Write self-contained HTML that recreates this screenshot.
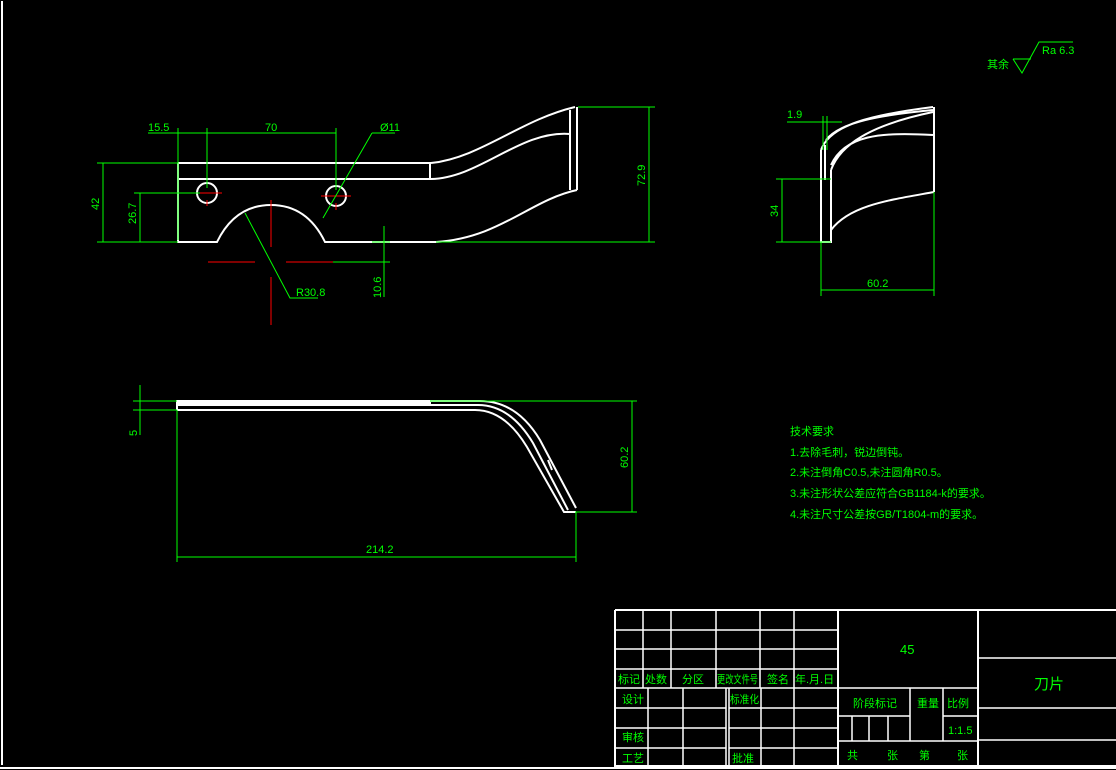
<!DOCTYPE html>
<html><head><meta charset="utf-8"><style>
html,body{margin:0;padding:0;background:#000;}
svg{display:block}
text{font-family:"Liberation Sans","Noto Sans CJK SC",sans-serif;fill:#00ff00;font-size:11px}
.w{stroke:#fff;fill:none;stroke-width:2}
.t{stroke:#fff;fill:none;stroke-width:1.5}
.g{stroke:#00ff00;fill:none;stroke-width:1}
.r{stroke:#ff0000;fill:none;stroke-width:1}
</style></head><body>
<svg width="1116" height="770" viewBox="0 0 1116 770" xmlns="http://www.w3.org/2000/svg">
<rect width="1116" height="770" fill="#000"/>
<path class="w" d="M2,1 V765 M0,768 H1116"/>
<!-- front view -->
<path class="w" d="M178,163 H431 M178,179 H431 M430,163 V179 M178,163 V242 H217 Q235,205 271,205 Q307,205 325,242 H436"/>
<path class="w" d="M431,163 C480,158 520,120 575,107 M431,179 C480,178 520,130 570,134 M436,242 C500,238 530,200 577,190 M577,107 V190 M570,110 V190"/>
<circle class="w" cx="207" cy="193" r="10"/>
<circle class="w" cx="336" cy="196" r="10"/>
<path class="r" d="M192,193 H222 M207,200 V206 M321,196 H351 M336,203 V210 M208,262 H255 M286,262 H333 M271,200 V247 M271,277 V325"/>
<path class="g" d="M333,262 H390 M148,133 H336 M178,128 V240 M207,128 V188 M336,128 V190 M372,133 H395 M372,133 L323,218 M97,163 H178 M97,242 H178 M103,163 V242 M134,193 H200 M140,193 V242 M578,107 H655 M436,242 H655 M649,107 V242 M245,213 L290,298 H318 M384,226 V297 M372,242 H390"/>
<text x="148" y="131">15.5</text>
<text x="265" y="131">70</text>
<text x="380" y="131">Ø11</text>
<text x="296" y="296">R30.8</text>
<text transform="translate(99,210) rotate(-90)">42</text>
<text transform="translate(136,224) rotate(-90)">26.7</text>
<text transform="translate(645,186) rotate(-90)">72.9</text>
<text transform="translate(381,298) rotate(-90)">10.6</text>
<!-- side view -->
<path class="w" d="M821,150 V242 H831 V170"/>
<path class="w" d="M821,150 C830,125 870,115 933,107 M826,140 C840,122 880,115 933,110 M831,165 C845,135 880,132 933,135 M831,170 C840,145 870,125 933,112 M831,230 C850,205 890,200 934,192 M934,107 V192 M825,145 V180"/>
<path class="g" d="M787,122 H842 M823,116 V150 M827,116 V150 M776,179 H831 M776,242 H831 M782,179 V242 M821,242 V296 M934,192 V296 M821,290 H934"/>
<text x="787" y="118">1.9</text>
<text x="867" y="287">60.2</text>
<text transform="translate(778,217) rotate(-90)">34</text>
<text x="987" y="68">其余</text>
<path class="g" d="M1013,59 H1031 M1013,59 L1022,73 L1039,42 H1073"/>
<text x="1042" y="54">Ra 6.3</text>
<!-- bottom view -->
<rect x="177" y="400" width="254" height="6" fill="#fff"/>
<path class="w" d="M177,410 H430 M177,400 V410"/>
<path class="w" d="M430,401 H480 C505,401 525,415 540,440 L576,508 M430,405 H478 C500,405 518,418 533,443 L568,510 M430,410 H475 C495,410 512,422 527,447 L564,512 H576 M548,460 L552,470"/>
<path class="g" d="M140,385 V435 M133,401 H177 M133,410 H177 M430,401 H637 M575,512 H637 M632,401 V512 M177,410 V562 M576,512 V562 M177,557 H576"/>
<text transform="translate(137,436) rotate(-90)">5</text>
<text transform="translate(628,468) rotate(-90)">60.2</text>
<text x="366" y="553">214.2</text>
<text x="790" y="435">技术要求</text>
<text x="790" y="456">1.去除毛刺，锐边倒钝。</text>
<text x="790" y="476">2.未注倒角C0.5,未注圆角R0.5。</text>
<text x="790" y="497">3.未注形状公差应符合GB1184-k的要求。</text>
<text x="790" y="518">4.未注尺寸公差按GB/T1804-m的要求。</text>
<!-- title block -->
<path class="w" d="M615,610 H1116 M615,610 V766 H1116 M838,610 V766 M978,610 V766"/>
<path class="t" d="M615,630 H838 M615,649 H838 M615,669 H838 M615,688 H838 M615,708 H726 M729,708 H838 M615,728 H726 M729,728 H838 M615,748 H726 M729,748 H838
M643,610 V688 M671,610 V688 M716,610 V688 M760,610 V688 M794,610 V688
M648,688 V766 M683,688 V766 M726,688 V766 M729,688 V766 M761,688 V766 M794,688 V766"/>
<path class="t" d="M838,688 H978 M838,716 H910 M838,741 H978 M910,688 V741 M943,688 V741 M943,716 H978 M852,716 V741 M869,716 V741 M888,716 V741 M978,658 H1116 M978,708 H1116 M978,740 H1116"/>
<g style="font-size:10px">
<text x="618" y="683">标记</text><text x="645" y="683">处数</text><text x="682" y="683">分区</text><text x="717" y="683" textLength="41" lengthAdjust="spacingAndGlyphs">更改文件号</text><text x="767" y="683">签名</text><text x="795" y="683">年.月.日</text>
<text x="622" y="703">设计</text><text x="730" y="703" textLength="29" lengthAdjust="spacingAndGlyphs">标准化</text>
<text x="622" y="741">审核</text><text x="622" y="762">工艺</text><text x="732" y="762">批准</text>
<text x="853" y="707">阶段标记</text><text x="917" y="707">重量</text><text x="947" y="707">比例</text>
<text x="948" y="734">1:1.5</text>
<text x="847" y="759">共</text><text x="887" y="759">张</text><text x="919" y="759">第</text><text x="957" y="759">张</text>
</g>
<text x="900" y="654" style="font-size:13px">45</text>
<text x="1034" y="689" style="font-size:15px">刀片</text>
</svg>
</body></html>
